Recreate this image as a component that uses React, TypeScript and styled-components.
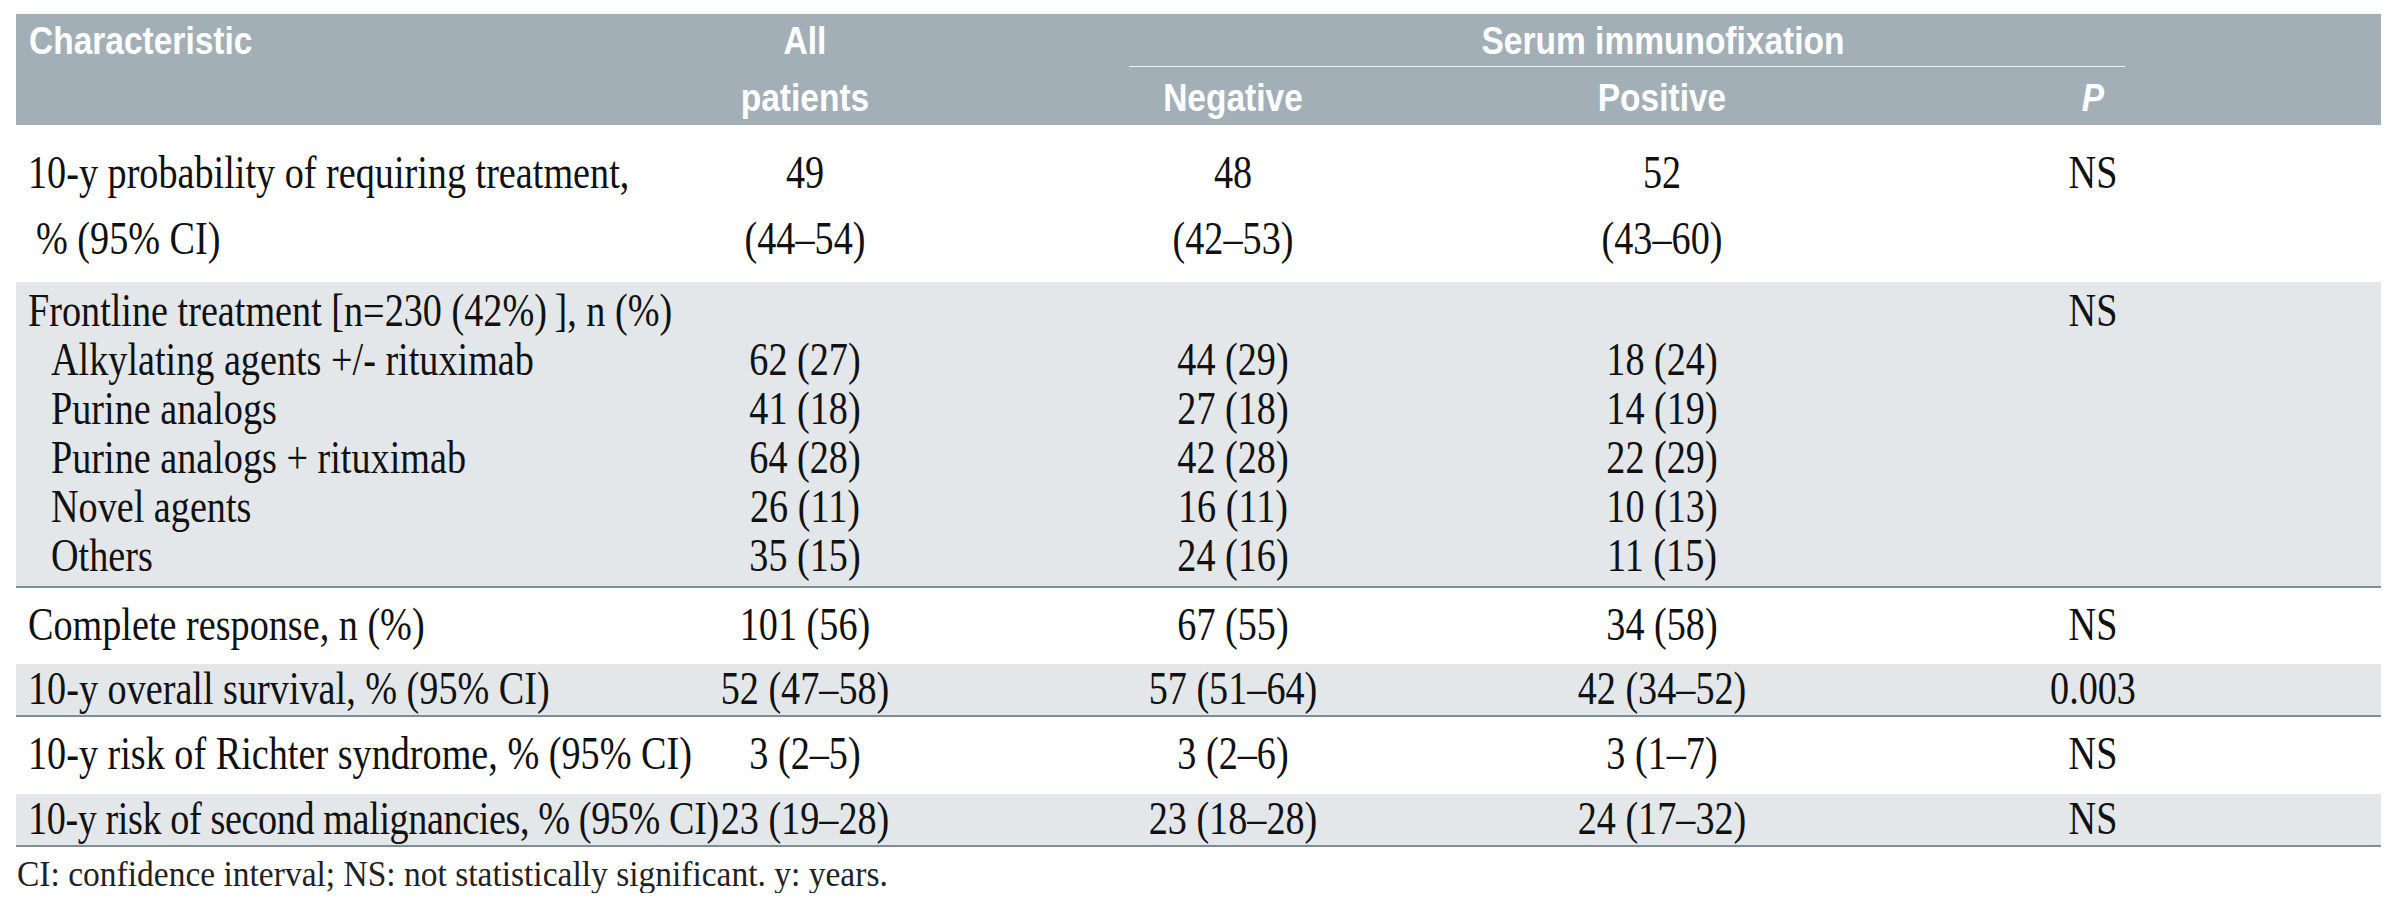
import React from 'react';
import styled, { createGlobalStyle } from 'styled-components';

const GlobalStyle = createGlobalStyle`
  html, body {
    margin: 0;
    padding: 0;
    background: #ffffff;
  }
`;

// column widths of the table grid (label, all patients, negative, positive, P, tail)
const COLS = '584px 410px 446px 412px 450px 63px';

const Page = styled.div`
  padding: 14px 14px 0 16px;
  width: 2365px;
`;

const Header = styled.div`
  display: grid;
  grid-template-columns: ${COLS};
  grid-template-rows: 53px 58px;
  background: #a3afb7;
  color: #ffffff;
  font-family: 'Liberation Sans', Arial, sans-serif;
  font-weight: 700;
  font-size: 33.5px;
  line-height: 40px;
  white-space: nowrap;
`;

const HeadCell = styled.div<{ $row: number; $col: number; $left?: boolean; $italic?: boolean }>`
  grid-row: ${p => p.$row};
  grid-column: ${p => p.$col};
  text-align: ${p => (p.$left ? 'left' : 'center')};
  padding-top: ${p => (p.$row === 1 ? 7 : 11)}px;
  padding-left: ${p => (p.$left ? 13 : 0)}px;
  font-style: ${p => (p.$italic ? 'italic' : 'normal')};
`;

const GroupHead = styled.div`
  grid-row: 1;
  grid-column: 3 / 6;
  margin: 0 193px 0 119px;
  padding: 7px 0 0 72px;
  text-align: center;
  border-bottom: 1px solid #eef1f3;
`;

const Stretch = styled.span<{ $y?: number }>`
  display: inline-block;
  transform: scaleY(${p => p.$y ?? 1.22});
`;

const Section = styled.div<{ $shade?: boolean; $lh: number; $top: number; $bottom: number }>`
  display: grid;
  grid-template-columns: ${COLS};
  grid-auto-rows: ${p => p.$lh}px;
  padding: ${p => p.$top}px 0 ${p => p.$bottom}px;
  background: ${p => (p.$shade ? '#e3e7ea' : '#ffffff')};
  border-bottom: ${p => (p.$shade ? '2px solid #7d8e99' : 'none')};
  font-family: 'Liberation Serif', 'Times New Roman', serif;
  font-size: 38.2px;
  line-height: ${p => p.$lh}px;
  color: #111111;
  white-space: nowrap;
`;

const Label = styled.div<{ $indent: number; $tight?: boolean }>`
  grid-column: 1;
  padding-left: ${p => 12 + p.$indent}px;
  letter-spacing: ${p => (p.$tight ? '-0.4px' : 'normal')};
  overflow: visible;
`;

const Value = styled.div<{ $col: number }>`
  grid-column: ${p => p.$col};
  text-align: center;
`;

const Footnote = styled.div`
  padding: 7px 0 0 1px;
  font-family: 'Liberation Serif', 'Times New Roman', serif;
  font-size: 33.5px;
  line-height: 40px;
  color: #222222;
  white-space: nowrap;
`;

interface Line {
  label: string;
  indent?: number;
  tight?: boolean;
  all?: string;
  neg?: string;
  pos?: string;
  p?: string;
}

interface Block {
  shade?: boolean;
  lh: number;
  top: number;
  bottom: number;
  lines: Line[];
}

const blocks: Block[] = [
  {
    lh: 66,
    top: 14,
    bottom: 11,
    lines: [
      { label: '10-y probability of requiring treatment,', all: '49', neg: '48', pos: '52', p: 'NS' },
      { label: '% (95% CI)', indent: 8, all: '(44–54)', neg: '(42–53)', pos: '(43–60)' },
    ],
  },
  {
    shade: true,
    lh: 49,
    top: 4,
    bottom: 6,
    lines: [
      { label: 'Frontline treatment [n=230 (42%)\u2009], n (%)', p: 'NS' },
      { label: 'Alkylating agents +/- rituximab', indent: 23, all: '62 (27)', neg: '44 (29)', pos: '18 (24)' },
      { label: 'Purine analogs', indent: 23, all: '41 (18)', neg: '27 (18)', pos: '14 (19)' },
      { label: 'Purine analogs + rituximab', indent: 23, all: '64 (28)', neg: '42 (28)', pos: '22 (29)' },
      { label: 'Novel agents', indent: 23, all: '26 (11)', neg: '16 (11)', pos: '10 (13)' },
      { label: 'Others', indent: 23, all: '35 (15)', neg: '24 (16)', pos: '11 (15)' },
    ],
  },
  {
    lh: 49,
    top: 12,
    bottom: 15,
    lines: [{ label: 'Complete response, n (%)', all: '101 (56)', neg: '67 (55)', pos: '34 (58)', p: 'NS' }],
  },
  {
    shade: true,
    lh: 49,
    top: 0,
    bottom: 2,
    lines: [
      { label: '10-y overall survival, % (95% CI)', all: '52 (47–58)', neg: '57 (51–64)', pos: '42 (34–52)', p: '0.003' },
    ],
  },
  {
    lh: 49,
    top: 12,
    bottom: 16,
    lines: [{ label: '10-y risk of Richter syndrome, % (95% CI)', all: '3 (2–5)', neg: '3 (2–6)', pos: '3 (1–7)', p: 'NS' }],
  },
  {
    shade: true,
    lh: 49,
    top: 0,
    bottom: 2,
    lines: [
      {
        label: '10-y risk of second malignancies, % (95% CI)',
        tight: true,
        all: '23 (19–28)',
        neg: '23 (18–28)',
        pos: '24 (17–32)',
        p: 'NS',
      },
    ],
  },
];

const App: React.FC = () => {
  return (
    <Page>
      <GlobalStyle />
      <Header>
        <HeadCell $row={1} $col={1} $left>
          <Stretch $y={1.18}>Characteristic</Stretch>
        </HeadCell>
        <HeadCell $row={1} $col={2}>
          <Stretch $y={1.18}>All</Stretch>
        </HeadCell>
        <GroupHead>
          <Stretch $y={1.18}>Serum immunofixation</Stretch>
        </GroupHead>
        <HeadCell $row={2} $col={2}>
          <Stretch $y={1.18}>patients</Stretch>
        </HeadCell>
        <HeadCell $row={2} $col={3}>
          <Stretch $y={1.18}>Negative</Stretch>
        </HeadCell>
        <HeadCell $row={2} $col={4}>
          <Stretch $y={1.18}>Positive</Stretch>
        </HeadCell>
        <HeadCell $row={2} $col={5} $italic>
          <Stretch $y={1.18}>P</Stretch>
        </HeadCell>
      </Header>

      {blocks.map((b, i) => (
        <Section key={i} $shade={b.shade} $lh={b.lh} $top={b.top} $bottom={b.bottom}>
          {b.lines.map((l, j) => (
            <React.Fragment key={j}>
              <Label $indent={l.indent || 0} $tight={l.tight} style={{ gridRow: j + 1 }}>
                <Stretch>{l.label}</Stretch>
              </Label>
              {l.all && (
                <Value $col={2} style={{ gridRow: j + 1 }}>
                  <Stretch>{l.all}</Stretch>
                </Value>
              )}
              {l.neg && (
                <Value $col={3} style={{ gridRow: j + 1 }}>
                  <Stretch>{l.neg}</Stretch>
                </Value>
              )}
              {l.pos && (
                <Value $col={4} style={{ gridRow: j + 1 }}>
                  <Stretch>{l.pos}</Stretch>
                </Value>
              )}
              {l.p && (
                <Value $col={5} style={{ gridRow: j + 1 }}>
                  <Stretch>{l.p}</Stretch>
                </Value>
              )}
            </React.Fragment>
          ))}
        </Section>
      ))}

      <Footnote>
        <Stretch $y={1.05}>CI: confidence interval; NS: not statistically significant. y: years.</Stretch>
      </Footnote>
    </Page>
  );
};

export default App;
